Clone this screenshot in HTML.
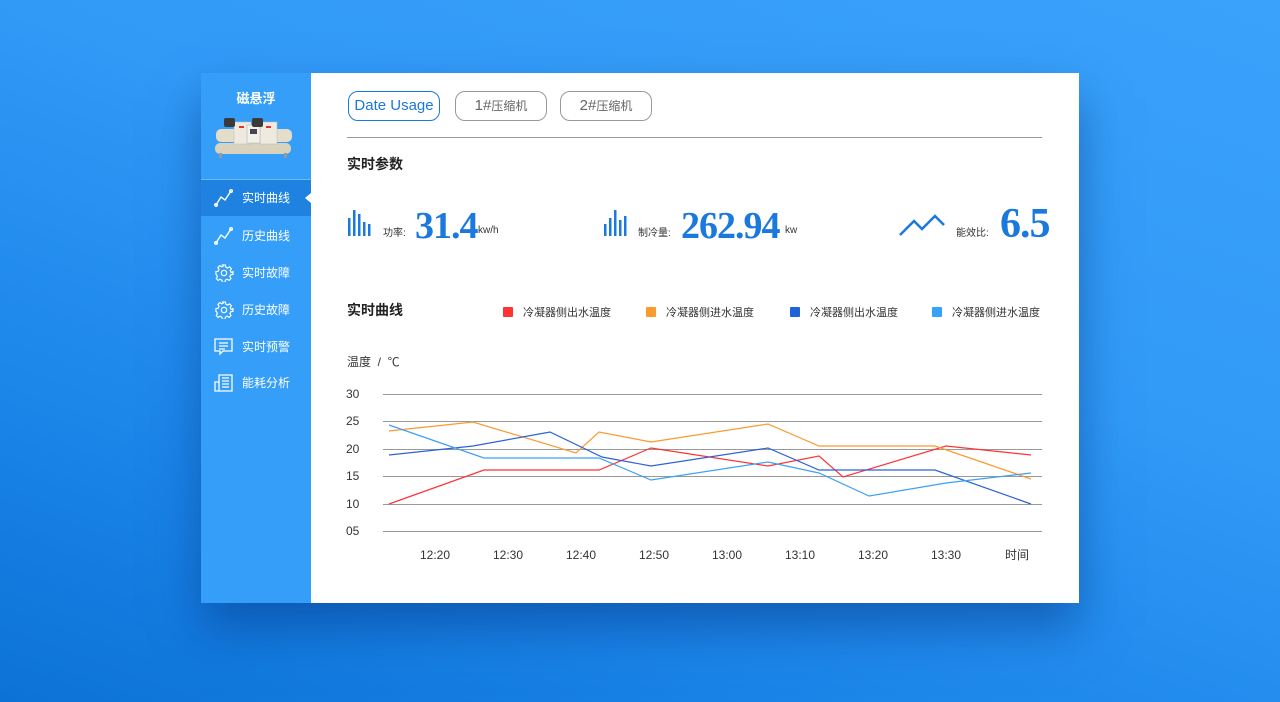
<!DOCTYPE html>
<html><head><meta charset="utf-8"><style>
*{margin:0;padding:0;box-sizing:border-box}
body{width:1280px;height:702px;overflow:hidden;font-family:"Liberation Sans","Noto Sans CJK SC",sans-serif;
background:linear-gradient(200deg,#3aa2fb 0%,#319af7 40%,#1a84e8 75%,#0c72d6 100%);position:relative}
.card{position:absolute;left:201px;top:73px;width:878px;height:530px;background:#fff;box-shadow:0 25px 45px rgba(5,60,140,.55)}
.side{position:absolute;left:0;top:0;width:110px;height:530px;background:#359ef8}
.brand{position:absolute;top:15px;width:110px;text-align:center;color:#fff;font-weight:bold;font-size:13px}
.sep{position:absolute;top:106px;left:0;width:110px;height:1px;background:#6fbaf9}
.item{position:absolute;left:0;width:110px;height:36px;color:#fff;font-size:12px;line-height:36px}
.item span{position:absolute;left:41px}
.item svg{position:absolute;left:13px;top:9px}
.active{background:#1f82e0}
.active:after{content:"";position:absolute;right:0;top:13px;border:5px solid transparent;border-right:6px solid #fff;border-left:0}
.btn{position:absolute;top:18px;height:30px;border:1px solid #999;border-radius:10px;font-size:15px;color:#777;text-align:center;line-height:28px}
.t{position:absolute;font-size:14px;font-weight:bold;color:#222}
.s{position:absolute;font-size:10px;color:#333}
.num{position:absolute;font-family:"Liberation Serif",serif;color:#1b78dc;font-size:38px;letter-spacing:-1px;font-weight:bold}
.lg{position:absolute;top:231px;font-size:11px;color:#333}
.lg i{display:inline-block;width:10px;height:10px;vertical-align:-1px;margin-right:10px;border-radius:1px}
.ax{position:absolute;font-size:12px;color:#333}
</style></head><body>
<div class="card">
 <div class="side">
  <div class="brand">磁悬浮</div>
  <svg style="position:absolute;left:13px;top:44px" width="80" height="42" viewBox="0 0 80 42">
   <rect x="2" y="12" width="76" height="13" rx="5" fill="#e3ddc9"/>
   <rect x="1" y="26" width="76" height="11" rx="5" fill="#d9d2bd"/>
   <rect x="20" y="5" width="17" height="22" fill="#eeeae0" stroke="#bbb" stroke-width=".5"/>
   <rect x="46" y="5" width="17" height="22" fill="#eeeae0" stroke="#bbb" stroke-width=".5"/>
   <rect x="33" y="8" width="13" height="18" fill="#f3f0e8" stroke="#aaa" stroke-width=".5"/>
   <rect x="36" y="12" width="7" height="5" fill="#445"/>
   <rect x="10" y="1" width="11" height="9" rx="2" fill="#3b3a3a"/>
   <rect x="38" y="1" width="11" height="9" rx="2" fill="#3b3a3a"/>
   <rect x="25" y="9" width="5" height="2" fill="#d33"/><rect x="52" y="9" width="5" height="2" fill="#d33"/>
   <rect x="5" y="36" width="3" height="5" fill="#999"/><rect x="70" y="36" width="3" height="5" fill="#999"/>
  </svg>
  <div class="sep"></div>
  <div class="item active" style="top:107px"><svg width="20" height="18" viewBox="0 0 20 18" fill="none" stroke="#fff" stroke-width="1.4"><path d="M2 16 L7 8 L11 11 L17 2"/><circle cx="2" cy="16" r="1.3"/><circle cx="17" cy="2" r="1.3"/></svg><span>实时曲线</span></div>
  <div class="item" style="top:145px"><svg width="20" height="18" viewBox="0 0 20 18" fill="none" stroke="#fff" stroke-width="1.4"><path d="M2 16 L7 8 L11 11 L17 2"/><circle cx="2" cy="16" r="1.3"/><circle cx="17" cy="2" r="1.3"/></svg><span>历史曲线</span></div>
  <div class="item" style="top:182px"><svg width="20" height="18" viewBox="0 0 20 20" fill="none" stroke="#fff" stroke-width="1.3"><path d="M8.5 1h3l.5 2.5 2 1 2.2-1.3 2 2-1.3 2.2 1 2L20 8.5v3l-2.5.5-1 2 1.3 2.2-2 2-2.2-1.3-2 1-.5 2.5h-3l-.5-2.5-2-1-2.2 1.3-2-2 1.3-2.2-1-2L1 11.5v-3l2.5-.5 1-2-1.3-2.2 2-2 2.2 1.3 2-1z"/><circle cx="10" cy="10" r="3"/></svg><span>实时故障</span></div>
  <div class="item" style="top:219px"><svg width="20" height="18" viewBox="0 0 20 20" fill="none" stroke="#fff" stroke-width="1.3"><path d="M8.5 1h3l.5 2.5 2 1 2.2-1.3 2 2-1.3 2.2 1 2L20 8.5v3l-2.5.5-1 2 1.3 2.2-2 2-2.2-1.3-2 1-.5 2.5h-3l-.5-2.5-2-1-2.2 1.3-2-2 1.3-2.2-1-2L1 11.5v-3l2.5-.5 1-2-1.3-2.2 2-2 2.2 1.3 2-1z"/><circle cx="10" cy="10" r="3"/></svg><span>历史故障</span></div>
  <div class="item" style="top:256px"><svg width="20" height="18" viewBox="0 0 20 18" fill="none" stroke="#fff" stroke-width="1.3"><path d="M1 1h17v12H9l-3 3v-3H1z"/><path d="M5 5h9M5 8h9M5 11h6"/></svg><span>实时预警</span></div>
  <div class="item" style="top:292px"><svg width="20" height="18" viewBox="0 0 20 18" fill="none" stroke="#fff" stroke-width="1.3"><path d="M5 1h13v16H5zM1 8h4v9H1zM8 4h7M8 7h7M8 10h7M8 13h7"/></svg><span>能耗分析</span></div>
 </div>
 <div class="btn" style="left:147px;width:92px;border-color:#1b78dc;color:#1b78dc">Date Usage</div>
 <div class="btn" style="left:254px;width:92px;color:#666">1#<span style="font-size:12px">压缩机</span></div>
 <div class="btn" style="left:359px;width:92px;color:#666">2#<span style="font-size:12px">压缩机</span></div>
 <div style="position:absolute;left:146px;top:64px;width:695px;height:1px;background:#999"></div>
 <div class="t" style="left:146px;top:81px">实时参数</div>
 <svg style="position:absolute;left:146px;top:135px" width="26" height="28"><g fill="#1b78dc"><rect x="1" y="10" width="2.5" height="18"/><rect x="6" y="2" width="2.5" height="26"/><rect x="11" y="6" width="2.5" height="22"/><rect x="16" y="14" width="2.5" height="14"/><rect x="21" y="16" width="2.5" height="12"/></g></svg>
 <div class="s" style="left:182px;top:151px">功率:</div>
 <div class="num" style="left:214px;top:131px">31.4</div>
 <div class="s" style="left:277px;top:152px">kw/h</div>
 <svg style="position:absolute;left:402px;top:135px" width="26" height="28"><g fill="#1b78dc"><rect x="1" y="16" width="2.5" height="12"/><rect x="6" y="10" width="2.5" height="18"/><rect x="11" y="2" width="2.5" height="26"/><rect x="16" y="12" width="2.5" height="16"/><rect x="21" y="8" width="2.5" height="20"/></g></svg>
 <div class="s" style="left:437px;top:151px">制冷量:</div>
 <div class="num" style="left:480px;top:131px">262.94</div>
 <div class="s" style="left:584px;top:152px">kw</div>
 <svg style="position:absolute;left:698px;top:140px" width="48" height="24"><path d="M1 22 L15 8 L23 16 L36 3 L45 12" fill="none" stroke="#1b78dc" stroke-width="2.5"/></svg>
 <div class="s" style="left:755px;top:151px">能效比:</div>
 <div class="num" style="left:799px;top:127px;font-size:42px">6.5</div>
 <div class="t" style="left:146px;top:227px">实时曲线</div>
 <div class="lg" style="left:302px"><i style="background:#f33"></i>冷凝器侧出水温度</div>
 <div class="lg" style="left:445px"><i style="background:#fb9a2e"></i>冷凝器侧进水温度</div>
 <div class="lg" style="left:589px"><i style="background:#2062d8"></i>冷凝器侧出水温度</div>
 <div class="lg" style="left:731px"><i style="background:#38a2fb"></i>冷凝器侧进水温度</div>
 <div class="ax" style="left:146px;top:280px">温度 &nbsp;/ &nbsp;℃</div>
</div>
<svg style="position:absolute;left:0;top:0" width="1280" height="702">
 <g stroke="#999" stroke-width="1"><path d="M383 394.5H1042M383 421.5H1042M383 449.5H1042M383 476.5H1042M383 504.5H1042M383 531.5H1042"/></g>
 <g font-family="Liberation Sans" font-size="12" fill="#333">
  <text x="346" y="398">30</text><text x="346" y="425">25</text><text x="346" y="453">20</text><text x="346" y="480">15</text><text x="346" y="508">10</text><text x="346" y="535">05</text>
  <g text-anchor="middle"><text x="435" y="559">12:20</text><text x="508" y="559">12:30</text><text x="581" y="559">12:40</text><text x="654" y="559">12:50</text><text x="727" y="559">13:00</text><text x="800" y="559">13:10</text><text x="873" y="559">13:20</text><text x="946" y="559">13:30</text><text x="1017" y="559" font-family="Liberation Sans,Noto Sans CJK SC,sans-serif">时间</text></g>
 </g>
 <g fill="none" stroke-width="1.2">
  <polyline stroke="#f33" points="389,504 484,470 599,470 651,448 768,466 819,456 843,477 946,446 1031,455"/>
  <polyline stroke="#fb9a2e" points="389,431 473,422 576,453 599,432 651,442 768,424 819,446 935,446 1031,479"/>
  <polyline stroke="#2c62d8" points="389,455 473,446 550,432 602,457 651,466 768,448 819,470 935,470 1031,504"/>
  <polyline stroke="#3fa0f5" points="389,425 484,458 599,458 651,480 768,462 819,473 869,496 946,483 1031,473"/>
 </g>
</svg>
</body></html>
